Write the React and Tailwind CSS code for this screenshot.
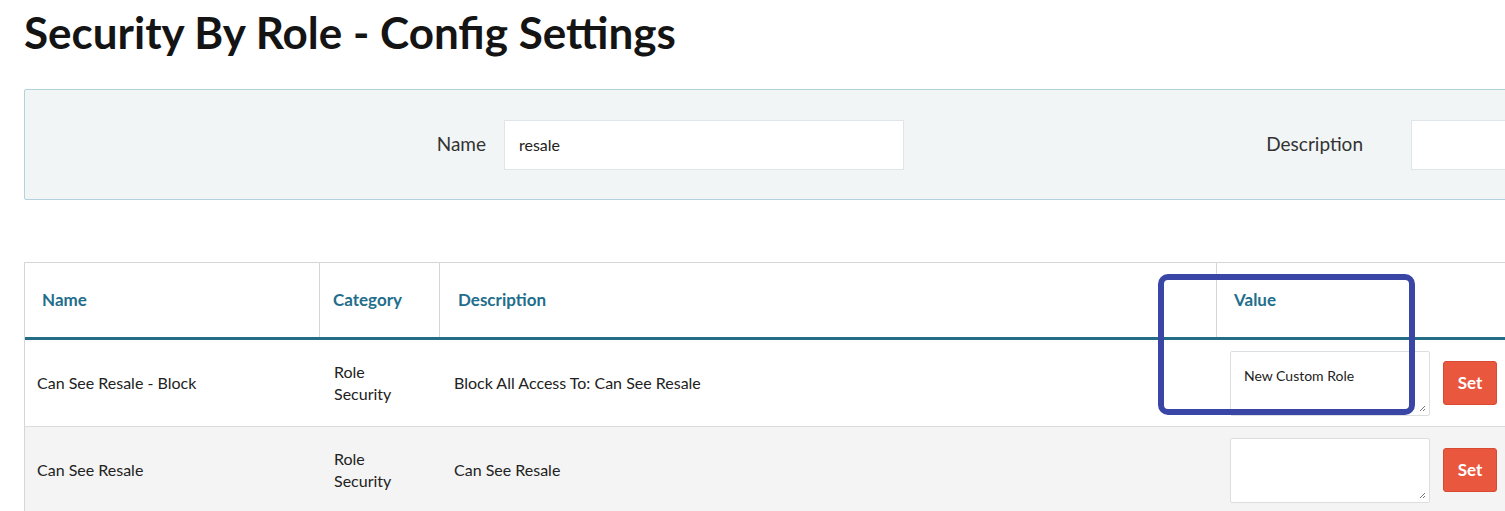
import React from "react";

const font = { fontFamily: "'Source Sans Pro', Lato, 'Liberation Sans', sans-serif" };

function Row({ name, desc, value, shaded }) {
  return (
    <div className={`grid grid-cols-[295px_120px_777px_320px] h-[87px] border-b border-[#dcdcdc] ${shaded ? "bg-[#f4f4f4]" : "bg-white"}`}>
      <div className="flex items-center pl-[12px] text-[16px] text-[#222]">{name}</div>
      <div className="flex items-center pl-[14px] text-[16px] text-[#222] leading-[22px]">
        <span>Role<br />Security</span>
      </div>
      <div className="flex items-center pl-[14px] text-[16px] text-[#222]">{desc}</div>
      <div className="flex items-center pl-[13px] gap-[13px]">
        <div className="relative shrink-0 w-[200px] h-[65px] bg-white border border-[#dcdfe2] rounded-[2px] px-[13px] pt-[13px] text-[14px] text-[#222]">
          {value}
          <svg className="absolute right-[3px] bottom-[3px]" width="7" height="7" viewBox="0 0 7 7">
            <path d="M6 1L1 6M6 4L4 6" stroke="#777" strokeWidth="1" />
          </svg>
        </div>
        <button className="shrink-0 w-[54px] h-[44px] bg-[#e9573e] rounded-[3px] text-white font-bold text-[17px] border border-[#d94a32]">Set</button>
      </div>
    </div>
  );
}

export default function App() {
  return (
    <div className="relative w-[1505px] h-[511px] overflow-hidden bg-white" style={font}>
      <h1 className="pl-[24px] pt-[4px] text-[44px] leading-[56px] font-bold text-[#141414]">
        Security By Role - Config Settings
      </h1>
      <div className="ml-[24px] mt-[29px] w-[1520px] h-[111px] bg-[#f1f5f6] border border-[#b3d3dc] rounded-[2px] flex items-center">
        <div className="shrink-0 w-[461px] text-right text-[19px] text-[#333]">Name</div>
        <div className="shrink-0 ml-[18px] w-[400px] h-[50px] bg-white border border-[#dfe5e8] flex items-center pl-[14px] text-[16px] text-[#222]">resale</div>
        <div className="shrink-0 w-[459px] text-right text-[19px] text-[#333]">Description</div>
        <div className="shrink-0 ml-[48px] w-[200px] h-[50px] bg-white border border-[#dfe5e8]"></div>
      </div>
      <div className="ml-[24px] mt-[62px] w-[1520px] border-t border-l border-[#d6d6d6]">
        <div className="grid grid-cols-[295px_120px_777px_320px] h-[77px] border-b-[3px] border-[#236d86] text-[17px] font-bold text-[#1f6e8c]">
          <div className="flex items-center pl-[17px] border-r border-[#d6d6d6]">Name</div>
          <div className="flex items-center pl-[13px] border-r border-[#d6d6d6]">Category</div>
          <div className="flex items-center pl-[18px] border-r border-[#d6d6d6]">Description</div>
          <div className="flex items-center pl-[17px]">Value</div>
        </div>
        <Row name="Can See Resale - Block" desc="Block All Access To: Can See Resale" value="New Custom Role" />
        <Row name="Can See Resale" desc="Can See Resale" value="" shaded />
      </div>
      <div className="absolute left-[1158px] top-[274px] w-[257px] h-[141px] border-[6px] border-[#3a46a6] rounded-[10px] pointer-events-none"></div>
    </div>
  );
}
